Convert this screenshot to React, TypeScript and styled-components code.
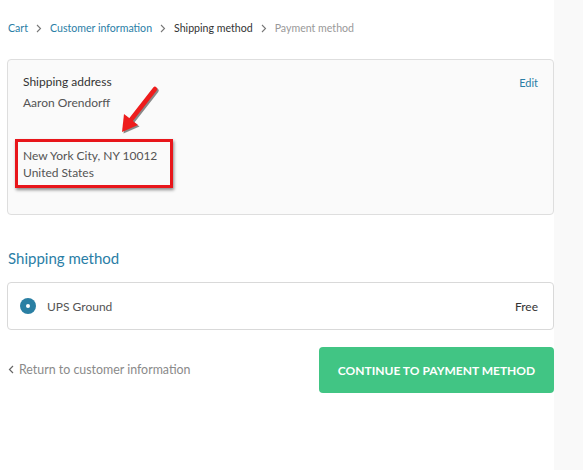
import styled, { createGlobalStyle } from "styled-components";

const GlobalStyle = createGlobalStyle`
  html, body {
    margin: 0;
    padding: 0;
    background: #ffffff;
  }
  body {
    font-family: Lato, "Noto Sans", "Liberation Sans", sans-serif;
    color: #545454;
  }
`;

const Page = styled.div`
  display: flex;
  width: 583px;
  height: 470px;
`;

const Main = styled.main`
  width: 554px;
  padding: 20px 0 0 7px;
  box-sizing: border-box;
`;

const Aside = styled.aside`
  flex: 1;
  background: #f9f9f9;
`;

const Breadcrumb = styled.nav`
  display: flex;
  align-items: center;
  gap: 8px;
  font-size: 10.6px;
  line-height: 16px;
  padding-left: 1px;
`;

const Crumb = styled.span<{ $state: "link" | "current" | "next" }>`
  color: ${({ $state }) =>
    $state === "link" ? "#2a7ea6" : $state === "current" ? "#333333" : "#999999"};
`;

const Chevron = () => (
  <svg width="6" height="9" viewBox="0 0 6 9">
    <path d="M1 1l3.5 3.5L1 8" fill="none" stroke="#777" strokeWidth="1.1" />
  </svg>
);

const AddressBox = styled.section`
  position: relative;
  margin-top: 23px;
  height: 156px;
  box-sizing: border-box;
  background: #fafafa;
  border: 1px solid #dedede;
  border-radius: 4px;
  padding: 14px 15px 0 15px;
`;

const BoxHeader = styled.div`
  display: flex;
  justify-content: space-between;
  align-items: center;
`;

const Label = styled.div`
  font-size: 12px;
  line-height: 16px;
  color: #333333;
`;

const EditLink = styled.a`
  font-size: 11px;
  color: #2a7ea6;
  text-decoration: none;
`;

const Line = styled.div`
  font-size: 12px;
  line-height: 17px;
  color: #545454;
`;

const NameLine = styled(Line)`
  margin-top: 4px;
`;

const Highlight = styled.div`
  display: inline-block;
  margin: 28px 0 0 -8px;
  padding: 5px 10px 4px 5px;
  width: 158px;
  box-sizing: border-box;
  border: 3px solid #e8161b;
  box-shadow: 1px 2px 3px rgba(0, 0, 0, 0.45);
`;

const Arrow = styled.svg`
  position: absolute;
  left: 102px;
  top: 22px;
  overflow: visible;
`;

const SectionTitle = styled.h2`
  margin: 33px 0 0 1px;
  font-size: 15px;
  line-height: 20px;
  font-weight: 400;
  color: #2a7ea6;
`;

const MethodBox = styled.div`
  margin-top: 14px;
  height: 48px;
  box-sizing: border-box;
  border: 1px solid #d9d9d9;
  border-radius: 4px;
  background: #ffffff;
  display: flex;
  align-items: center;
  padding: 0 15px 0 12px;
  gap: 11px;
  font-size: 12px;
  color: #545454;
`;

const Radio = styled.span`
  width: 16px;
  height: 16px;
  border-radius: 50%;
  background: #2a7fa3;
  display: flex;
  align-items: center;
  justify-content: center;

  &::after {
    content: "";
    width: 4px;
    height: 4px;
    border-radius: 50%;
    background: #ffffff;
  }
`;

const Price = styled.span`
  margin-left: auto;
  color: #333333;
`;

const Footer = styled.div`
  margin-top: 17px;
  display: flex;
  align-items: center;
  justify-content: space-between;
`;

const BackLink = styled.a`
  display: flex;
  align-items: center;
  gap: 5px;
  font-size: 12.4px;
  color: #8a8a8a;
  text-decoration: none;
  padding-left: 1px;
  margin-top: -2px;
`;

const ContinueButton = styled.button`
  width: 235px;
  height: 46px;
  border: none;
  border-radius: 4px;
  background: #41c584;
  color: #ffffff;
  font-family: Lato, "Noto Sans", "Liberation Sans", sans-serif;
  font-size: 12px;
  font-weight: 700;
`;

export default function App() {
  return (
    <>
      <GlobalStyle />
      <Page>
        <Main>
          <Breadcrumb>
            <Crumb $state="link">Cart</Crumb>
            <Chevron />
            <Crumb $state="link">Customer information</Crumb>
            <Chevron />
            <Crumb $state="current">Shipping method</Crumb>
            <Chevron />
            <Crumb $state="next">Payment method</Crumb>
          </Breadcrumb>

          <AddressBox>
            <BoxHeader>
              <Label>Shipping address</Label>
              <EditLink href="#">Edit</EditLink>
            </BoxHeader>
            <NameLine>Aaron Orendorff</NameLine>
            <Highlight>
              <Line>New York City, NY 10012</Line>
              <Line>United States</Line>
            </Highlight>
            <Arrow width="50" height="50" viewBox="0 0 50 50">
              <g transform="translate(1.5,1.5)" opacity="0.45">
                <path d="M45 7L20 39" stroke="#000" strokeWidth="4.5" strokeLinecap="round" />
                <path d="M12 50L14 32L28 43Z" fill="#000" />
              </g>
              <path d="M45 7L20 39" stroke="#ee1c1c" strokeWidth="4.5" strokeLinecap="round" />
              <path d="M12 50L14 32L28 43Z" fill="#ee1c1c" />
            </Arrow>
          </AddressBox>

          <SectionTitle>Shipping method</SectionTitle>
          <MethodBox>
            <Radio />
            <span>UPS Ground</span>
            <Price>Free</Price>
          </MethodBox>

          <Footer>
            <BackLink href="#">
              <svg width="6" height="9" viewBox="0 0 6 9">
                <path d="M5 1L1.5 4.5L5 8" fill="none" stroke="#666" strokeWidth="1.2" />
              </svg>
              Return to customer information
            </BackLink>
            <ContinueButton>CONTINUE TO PAYMENT METHOD</ContinueButton>
          </Footer>
        </Main>
        <Aside />
      </Page>
    </>
  );
}
